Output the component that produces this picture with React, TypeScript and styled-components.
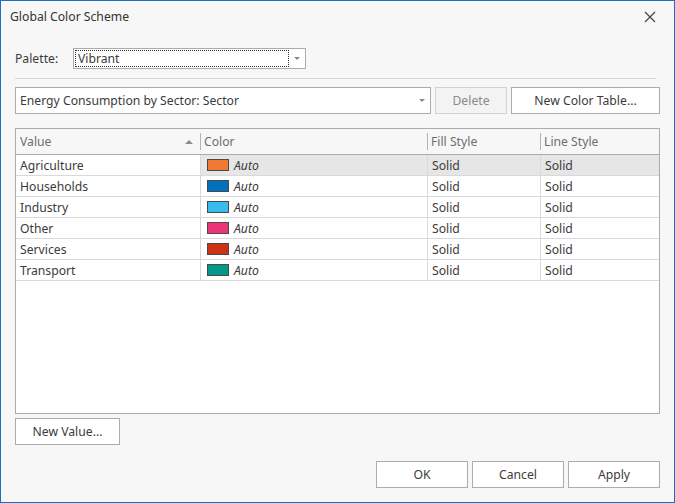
import React from "react";
import styled, { createGlobalStyle } from "styled-components";

const GlobalStyle = createGlobalStyle`
  html, body {
    margin: 0;
    padding: 0;
    background: #f7f7f7;
  }
  body {
    font-family: "Noto Sans", "Open Sans", sans-serif;
    font-size: 12.2px;
    color: #3b3b3b;
  }
`;

const Window = styled.div`
  width: 675px;
  height: 503px;
  box-sizing: border-box;
  border: 1px solid #1d6fc2;
  background: #f7f7f7;
  display: flex;
  flex-direction: column;
`;

const TitleBar = styled.div`
  height: 31px;
  display: flex;
  align-items: center;
  justify-content: space-between;
  padding: 0 18px 0 9px;
  color: #333;
`;

const Body = styled.div`
  flex: 1;
  display: flex;
  flex-direction: column;
  padding: 16px 14px 14px 14px;
`;

const PaletteRow = styled.div`
  display: flex;
  align-items: center;
  height: 21px;
`;

const Label = styled.span`
  width: 58px;
`;

const Combo = styled.div<{ $w: number; $h: number }>`
  width: ${(p) => p.$w}px;
  height: ${(p) => p.$h}px;
  box-sizing: border-box;
  border: 1px solid #acacac;
  background: #fff;
  display: flex;
  align-items: stretch;
  padding: 1px;
`;

const ComboText = styled.div<{ $focus?: boolean }>`
  flex: 1;
  display: flex;
  align-items: center;
  padding-left: 2px;
  border: 1px ${(p) => (p.$focus ? "dotted #333" : "solid transparent")};
  white-space: nowrap;
`;

const ArrowBox = styled.div`
  width: 15px;
  display: flex;
  align-items: center;
  justify-content: center;
`;

const Caret = styled.span`
  width: 0;
  height: 0;
  border-left: 3px solid transparent;
  border-right: 3px solid transparent;
  border-top: 3px solid #888;
`;

const Separator = styled.div`
  height: 1px;
  background: #d6d6d6;
  margin: 9px 4px 8px 0;
`;

const TableRow = styled.div`
  display: flex;
  gap: 4px;
  height: 27px;
`;

const Button = styled.button<{ $w: number; $disabled?: boolean }>`
  width: ${(p) => p.$w}px;
  height: 27px;
  box-sizing: border-box;
  border: 1px solid ${(p) => (p.$disabled ? "#d2d2d2" : "#acacac")};
  background: ${(p) => (p.$disabled ? "#f3f3f3" : "#fff")};
  color: ${(p) => (p.$disabled ? "#8a8a8a" : "#3b3b3b")};
  font-family: inherit;
  font-size: 12.2px;
  padding: 0;
`;

const Grid = styled.div`
  margin-top: 14px;
  height: 286px;
  box-sizing: border-box;
  border: 1px solid #acacac;
  background: #fff;
`;

const Columns = "184px 227px 113px 1fr";

const HeaderRow = styled.div`
  display: grid;
  grid-template-columns: ${Columns};
  height: 25px;
  background: #f7f7f7;
  border-bottom: 1px solid #acacac;
  color: #6e6e6e;
`;

const HeaderCell = styled.div<{ $first?: boolean }>`
  display: flex;
  align-items: center;
  justify-content: space-between;
  padding: 0 6px 0 4px;
  position: relative;
  &::before {
    content: "";
    display: ${(p) => (p.$first ? "none" : "block")};
    position: absolute;
    left: 0;
    top: 4px;
    bottom: 4px;
    width: 1px;
    background: #b4b4b4;
  }
`;

const SortUp = styled.span`
  width: 0;
  height: 0;
  border-left: 4px solid transparent;
  border-right: 4px solid transparent;
  border-bottom: 4px solid #8c8c8c;
  margin-right: 1px;
`;

const DataRow = styled.div`
  display: grid;
  grid-template-columns: ${Columns};
  height: 21px;
  box-sizing: border-box;
  border-bottom: 1px solid #d9d9d9;
`;

const Cell = styled.div<{ $sel?: boolean; $first?: boolean }>`
  display: flex;
  align-items: center;
  padding-left: 4px;
  background: ${(p) => (p.$sel ? "#e6e6e6" : "#fff")};
  border-left: ${(p) => (p.$first ? "none" : "1px solid #d9d9d9")};
  white-space: nowrap;
`;

const Swatch = styled.span<{ $c: string }>`
  width: 22px;
  height: 12px;
  box-sizing: border-box;
  border: 1px solid #4a4a4a;
  background: ${(p) => p.$c};
  margin: 0 5px 0 2px;
`;

const Auto = styled.span`
  font-style: italic;
`;

const NewValueRow = styled.div`
  margin-top: 4px;
`;

const Footer = styled.div`
  margin-top: auto;
  display: flex;
  justify-content: flex-end;
  gap: 4px;
`;

const CloseIcon = () => (
  <svg width="12" height="12" viewBox="0 0 12 12">
    <path d="M1 1L11 11M11 1L1 11" stroke="#444" strokeWidth="1.2" />
  </svg>
);

const rows = [
  { name: "Agriculture", color: "#f07a32" },
  { name: "Households", color: "#0072bd" },
  { name: "Industry", color: "#36bdee" },
  { name: "Other", color: "#ee3479" },
  { name: "Services", color: "#cc3314" },
  { name: "Transport", color: "#009988" },
];

export default function App() {
  return (
    <>
      <GlobalStyle />
      <Window>
        <TitleBar>
          <span>Global Color Scheme</span>
          <CloseIcon />
        </TitleBar>
        <Body>
          <PaletteRow>
            <Label>Palette:</Label>
            <Combo $w={233} $h={21}>
              <ComboText $focus>Vibrant</ComboText>
              <ArrowBox>
                <Caret />
              </ArrowBox>
            </Combo>
          </PaletteRow>
          <Separator />
          <TableRow>
            <Combo $w={416} $h={27}>
              <ComboText>Energy Consumption by Sector: Sector</ComboText>
              <ArrowBox>
                <Caret />
              </ArrowBox>
            </Combo>
            <Button $w={72} $disabled>
              Delete
            </Button>
            <Button $w={149}>New Color Table...</Button>
          </TableRow>
          <Grid>
            <HeaderRow>
              <HeaderCell $first>
                Value
                <SortUp />
              </HeaderCell>
              <HeaderCell>Color</HeaderCell>
              <HeaderCell>Fill Style</HeaderCell>
              <HeaderCell>Line Style</HeaderCell>
            </HeaderRow>
            {rows.map((r, i) => (
              <DataRow key={r.name}>
                <Cell $first>{r.name}</Cell>
                <Cell $sel={i === 0}>
                  <Swatch $c={r.color} />
                  <Auto>Auto</Auto>
                </Cell>
                <Cell $sel={i === 0}>Solid</Cell>
                <Cell $sel={i === 0}>Solid</Cell>
              </DataRow>
            ))}
          </Grid>
          <NewValueRow>
            <Button $w={105}>New Value...</Button>
          </NewValueRow>
          <Footer>
            <Button $w={92}>OK</Button>
            <Button $w={92}>Cancel</Button>
            <Button $w={92}>Apply</Button>
          </Footer>
        </Body>
      </Window>
    </>
  );
}
